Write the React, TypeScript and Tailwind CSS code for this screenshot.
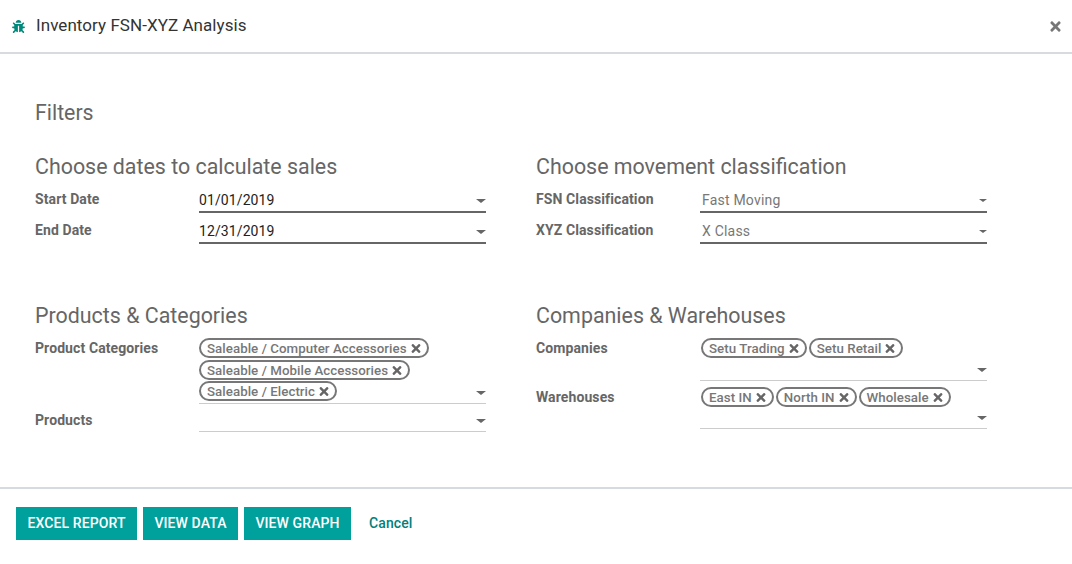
import { FaBug, FaTimes } from "react-icons/fa";

function Caret({ small }: { small?: boolean }) {
  return (
    <span
      className={
        small
          ? "absolute right-[0px] bottom-[9px] h-0 w-0 border-x-[4px] border-t-[3px] border-x-transparent border-t-[#666]"
          : "absolute right-0 bottom-[8px] h-0 w-0 border-x-[5px] border-t-[4px] border-x-transparent border-t-[#666]"
      }
    />
  );
}

function Tag({ label }: { label: string }) {
  return (
    <span className="flex h-[20px] items-center gap-[4px] rounded-full border-2 border-[#777] pl-[6px] pr-[6px] pt-[1px] text-[13.3px] font-medium leading-none tracking-[0.05px] text-[#777]">
      {label}
      <FaTimes className="h-[13px] w-[10px] text-[#666]" />
    </span>
  );
}

function Row({ label, children }: { label: string; children: React.ReactNode }) {
  return (
    <div className="flex">
      <div className="w-[164px] shrink-0 pt-[2px] text-[14px] font-bold leading-[20px] tracking-[0.1px] text-[#666]">{label}</div>
      <div className="min-w-0 flex-1">{children}</div>
    </div>
  );
}

function SelectField({ value, muted }: { value: string; muted?: boolean }) {
  return (
    <div
      className={`relative mb-[5px] h-[26px] border-b-2 border-[#666] pt-[3px] text-[14px] leading-[20px] ${
        muted ? "pl-[2px] tracking-[0.2px] text-[#777]" : "tracking-[0.1px] text-[#222]"
      }`}
    >
      {value}
      <Caret small={muted} />
    </div>
  );
}

function TagField({ tags, stacked, height }: { tags: string[]; stacked?: boolean; height: string }) {
  return (
    <div className={`relative border-b border-[#ccc] pt-[2px] ${height}`}>
      <div className={stacked ? "flex flex-col items-start gap-[1.7px]" : "flex gap-[2px] pl-[1px]"}>
        {tags.map((t) => (
          <Tag key={t} label={t} />
        ))}
      </div>
      <Caret />
    </div>
  );
}

function Heading({ children }: { children: React.ReactNode }) {
  return <h2 className="mb-[6px] pt-[1px] text-[21.4px] font-normal leading-[28px] text-[#666]">{children}</h2>;
}

export default function App() {
  return (
    <div className="flex h-[564px] flex-col bg-white font-['Roboto',sans-serif]">
      <header className="flex h-[54px] shrink-0 items-center border-b-2 border-[#d8dadd] pl-[12px] pr-[11px]">
        <FaBug className="h-[13px] w-[13px] text-[#00897b]" />
        <h1 className="ml-[11px] text-[17px] font-normal tracking-[0.06px] text-[#333]">Inventory FSN-XYZ Analysis</h1>
        <FaTimes className="ml-auto h-[15px] w-[11px] text-[#777]" />
      </header>

      <main className="h-[433px] shrink-0 pl-[35px] pr-[85px] pt-[45px]">
        <div className="text-[21.3px] leading-[28px] text-[#666]">Filters</div>
        <div className="mt-[25px] grid grid-cols-2 gap-x-[50px]">
          <section className="h-[149px]">
            <Heading>Choose dates to calculate sales</Heading>
            <Row label="Start Date">
              <SelectField value="01/01/2019" />
            </Row>
            <Row label="End Date">
              <SelectField value="12/31/2019" />
            </Row>
          </section>
          <section className="h-[149px]">
            <Heading>Choose movement classification</Heading>
            <Row label="FSN Classification">
              <SelectField value="Fast Moving" muted />
            </Row>
            <Row label="XYZ Classification">
              <SelectField value="X Class" muted />
            </Row>
          </section>
          <section>
            <Heading>Products &amp; Categories</Heading>
            <Row label="Product Categories">
              <div className="mb-[4px]">
                <TagField
                  stacked
                  height="h-[68px]"
                  tags={["Saleable / Computer Accessories", "Saleable / Mobile Accessories", "Saleable / Electric"]}
                />
              </div>
            </Row>
            <Row label="Products">
              <TagField height="h-[24px]" tags={[]} />
            </Row>
          </section>
          <section>
            <Heading>Companies &amp; Warehouses</Heading>
            <Row label="Companies">
              <div className="mb-[4px]">
                <TagField height="h-[45px]" tags={["Setu Trading", "Setu Retail"]} />
              </div>
            </Row>
            <Row label="Warehouses">
              <TagField height="h-[44px]" tags={["East IN", "North IN", "Wholesale"]} />
            </Row>
          </section>
        </div>
      </main>

      <footer className="flex items-start gap-[6px] border-t-2 border-[#d5dbe0] pl-[16px] pt-[18px]">
        <button className="h-[33px] w-[121px] bg-[#00a09d] text-[14px] font-medium tracking-[0.1px] text-white">EXCEL REPORT</button>
        <button className="h-[33px] w-[95px] bg-[#00a09d] text-[14px] font-medium tracking-[0.1px] text-white">VIEW DATA</button>
        <button className="h-[33px] w-[107px] bg-[#00a09d] text-[14px] font-medium tracking-[0.1px] text-white">VIEW GRAPH</button>
        <button className="ml-[12px] h-[33px] text-[14px] font-medium tracking-[0.1px] text-[#00807c]">Cancel</button>
      </footer>
    </div>
  );
}
